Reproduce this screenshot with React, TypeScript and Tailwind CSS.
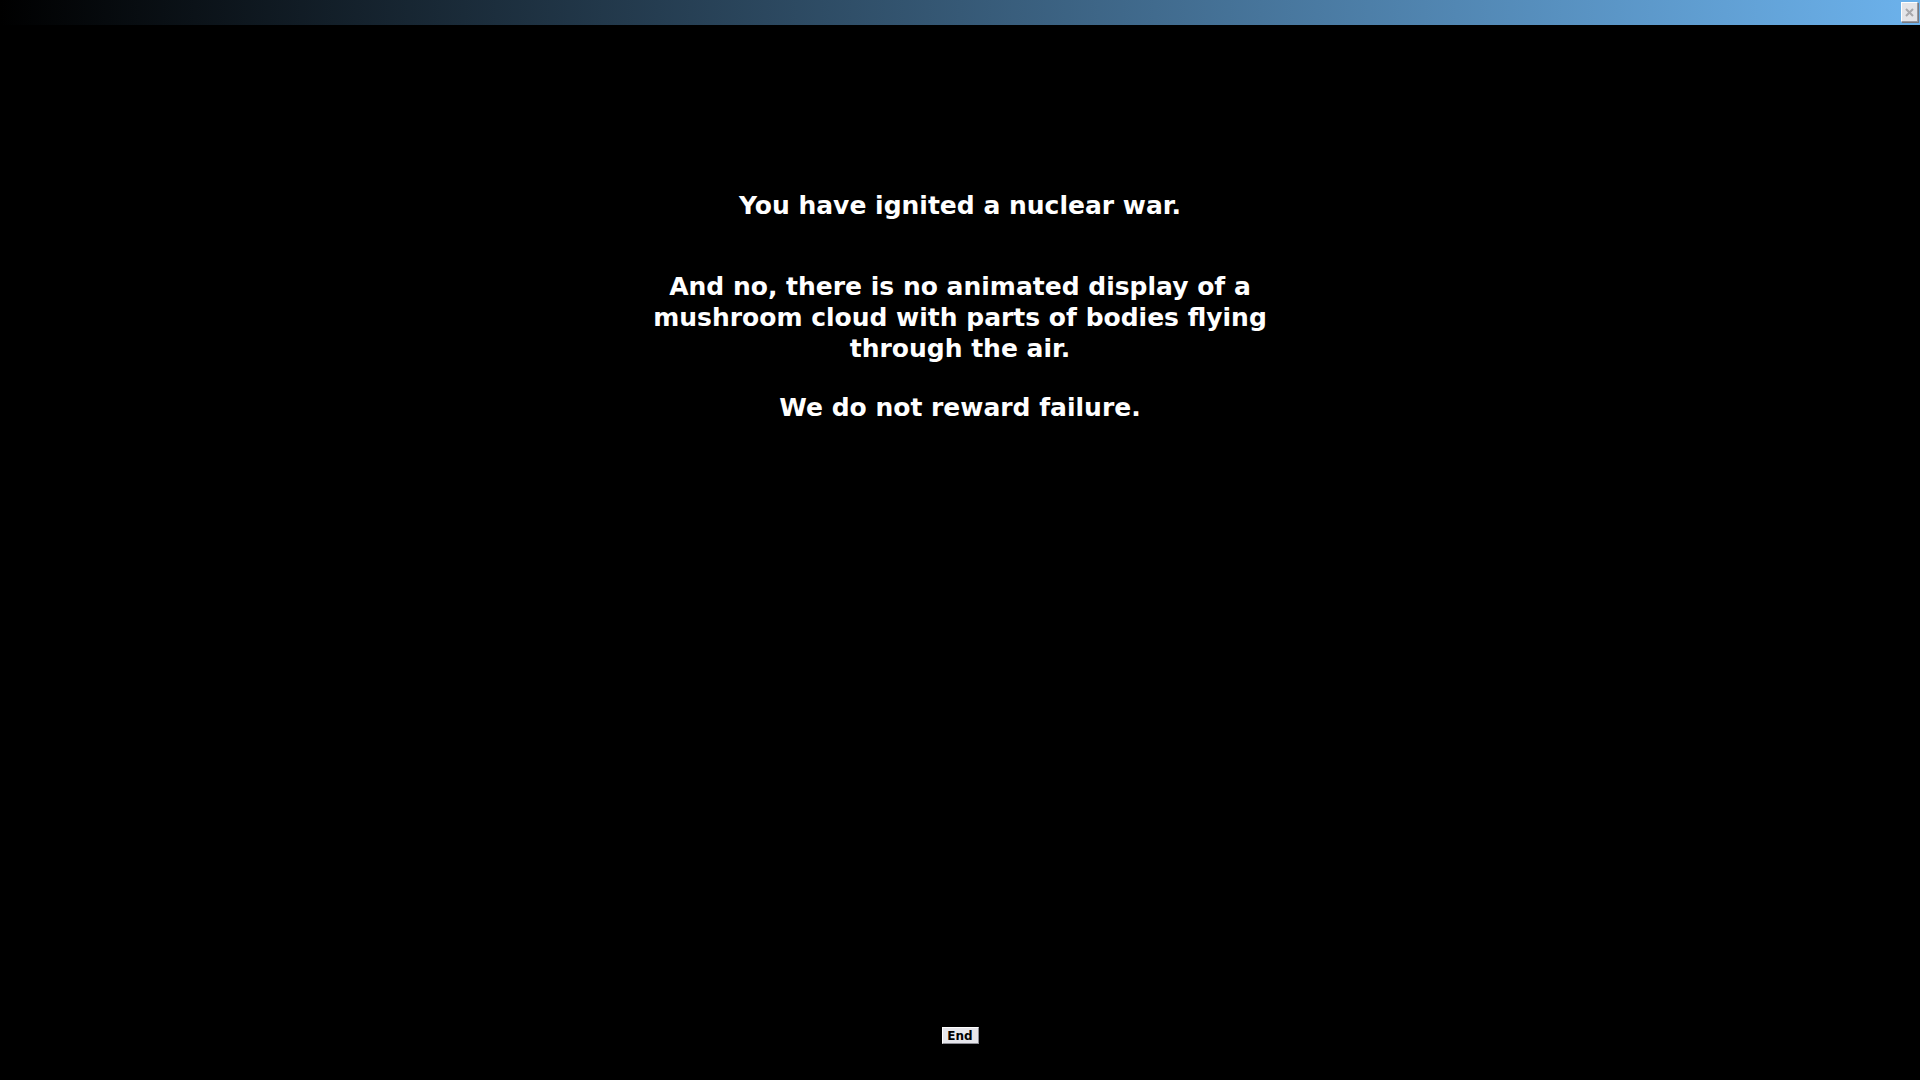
export default function App() {
  return (
    <div className="flex h-screen w-full flex-col bg-black font-['DejaVu_Sans',sans-serif] text-white">
      {/* title strip */}
      <div className="flex h-[25px] w-full shrink-0 items-start justify-end bg-[linear-gradient(to_right,#000000,#6cb2ec)] pr-[2px] pt-[2px]">
        <button
          type="button"
          className="flex h-[20px] w-[17px] items-center justify-center border border-t-white border-l-white border-r-[#9a9aa0] border-b-[#9a9aa0] bg-[#e4e4e8] shadow-[1px_1px_0_#7a7a80]"
        >
          <svg width="9" height="9" viewBox="0 0 9 9">
            <path d="M1 1 L8 8 M8 1 L1 8" stroke="#a8a8ac" strokeWidth="2" />
          </svg>
        </button>
      </div>

      <div className="mt-[165px] flex flex-col items-center text-center text-[25px] font-bold leading-[31px]">
        <p>You have ignited a nuclear war.</p>
        <p className="mt-[50px]">
          And no, there is no animated display of a
          <br />
          mushroom cloud with parts of bodies flying
          <br />
          through the air.
        </p>
        <p className="mt-[28px]">We do not reward failure.</p>
      </div>

      <div className="flex-1" />

      <div className="mb-[36px] flex justify-center">
        <button
          type="button"
          className="flex h-[17px] w-[37px] items-center justify-center border border-t-white border-l-white border-r-[#8c8c94] border-b-[#8c8c94] bg-[#e6e6ec] text-[12px] font-bold leading-none text-black"
        >
          End
        </button>
      </div>
    </div>
  );
}
